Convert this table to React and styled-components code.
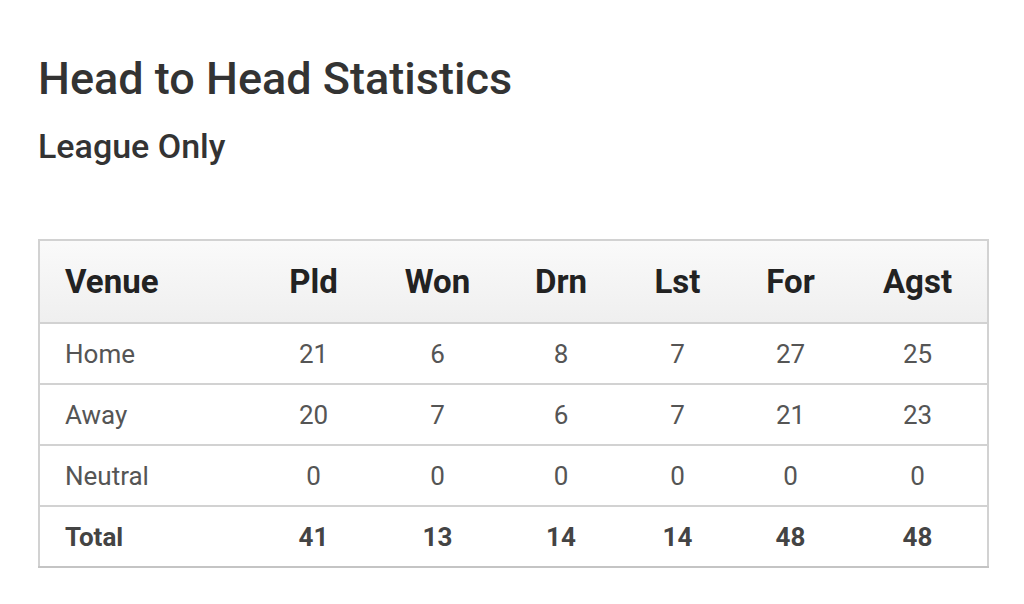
import styled, { createGlobalStyle } from "styled-components";

const GlobalStyle = createGlobalStyle`
  body {
    margin: 0;
    background: #ffffff;
    font-family: Roboto, "Liberation Sans", sans-serif;
  }
`;

const Page = styled.div`
  padding: 52px 37px 0 38px;
`;

const Title = styled.h2`
  margin: 0;
  font-size: 45px;
  line-height: 54px;
  font-weight: 500;
  color: #333333;
`;

const Subtitle = styled.h3`
  margin: 20px 0 0;
  font-size: 34px;
  line-height: 40px;
  font-weight: 500;
  color: #333333;
`;

const Table = styled.table`
  margin-top: 73px;
  width: 949px;
  border-collapse: collapse;
  table-layout: fixed;
  border: 2px solid #d2d2d2;
  border-bottom-color: #c4c4c4;
`;

const HeadRow = styled.tr`
  height: 83px;
  background: linear-gradient(#fafafa, #efefef);
`;

const Row = styled.tr`
  height: 61px;
  border-top: 2px solid #d2d2d2;
`;

const HeadCell = styled.th`
  padding: 0 0 0 ${(props) => (props.first ? "25px" : "0")};
  text-align: ${(props) => (props.first ? "left" : "center")};
  font-size: 33px;
  font-weight: 700;
  color: #222222;
`;

const Cell = styled.td`
  padding: 0 0 0 ${(props) => (props.first ? "25px" : "0")};
  text-align: ${(props) => (props.first ? "left" : "center")};
  font-size: 26px;
  font-weight: ${(props) => (props.bold ? 700 : 400)};
  color: ${(props) => (props.bold ? "#444444" : "#555555")};
`;

const columns = [
  { label: "Venue", width: 213 },
  { label: "Pld", width: 123 },
  { label: "Won", width: 125 },
  { label: "Drn", width: 122 },
  { label: "Lst", width: 111 },
  { label: "For", width: 115 },
  { label: "Agst", width: 140 },
];

const rows = [
  ["Home", 21, 6, 8, 7, 27, 25],
  ["Away", 20, 7, 6, 7, 21, 23],
  ["Neutral", 0, 0, 0, 0, 0, 0],
  ["Total", 41, 13, 14, 14, 48, 48],
];

export default function App() {
  return (
    <>
      <GlobalStyle />
      <Page>
        <Title>Head to Head Statistics</Title>
        <Subtitle>League Only</Subtitle>
        <Table>
          <colgroup>
            {columns.map((c) => (
              <col key={c.label} width={c.width} />
            ))}
          </colgroup>
          <thead>
            <HeadRow>
              {columns.map((c, i) => (
                <HeadCell key={c.label} first={i === 0}>
                  {c.label}
                </HeadCell>
              ))}
            </HeadRow>
          </thead>
          <tbody>
            {rows.map((r) => (
              <Row key={r[0]}>
                {r.map((v, i) => (
                  <Cell key={i} first={i === 0} bold={r[0] === "Total"}>
                    {v}
                  </Cell>
                ))}
              </Row>
            ))}
          </tbody>
        </Table>
      </Page>
    </>
  );
}
